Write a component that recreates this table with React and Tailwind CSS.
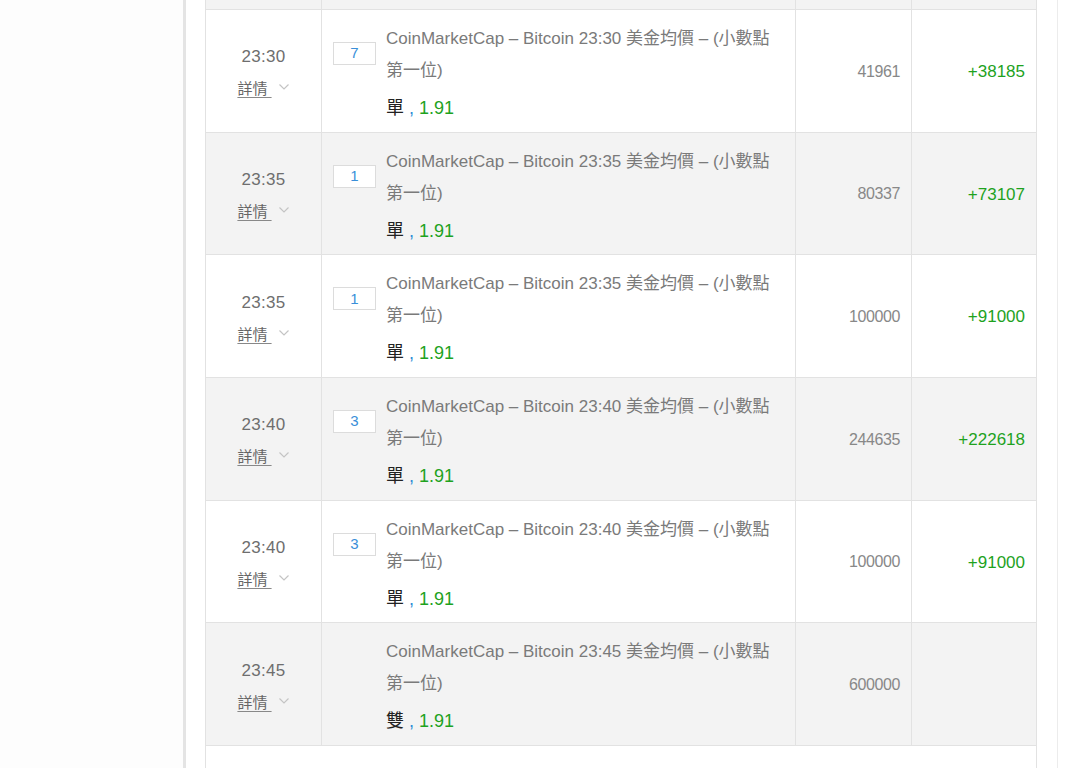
import React from "react";

const rows = [
  { time: "23:30", box: "7", pick: "單", amount: "41961", win: "+38185", gray: false },
  { time: "23:35", box: "1", pick: "單", amount: "80337", win: "+73107", gray: true },
  { time: "23:35", box: "1", pick: "單", amount: "100000", win: "+91000", gray: false },
  { time: "23:40", box: "3", pick: "單", amount: "244635", win: "+222618", gray: true },
  { time: "23:40", box: "3", pick: "單", amount: "100000", win: "+91000", gray: false },
  { time: "23:45", box: null, pick: "雙", amount: "600000", win: "", gray: true },
];

const font = { fontFamily: '"Liberation Sans", "Noto Sans CJK TC", sans-serif' };

function Chevron() {
  return (
    <svg width="12" height="8" viewBox="0 0 12 8" className="ml-[6px] -mt-[4px]">
      <path d="M1.5 1.5 L6 6 L10.5 1.5" fill="none" stroke="#c4c4c4" strokeWidth="1.2" />
    </svg>
  );
}

function Row({ r }) {
  return (
    <div
      className={`grid grid-cols-[116px_474px_116px_125px] h-[122.67px] border-b border-[#e2e2e2] ${
        r.gray ? "bg-[#f3f3f3]" : "bg-white"
      }`}
    >
      <div className="border-r border-[#e2e2e2] flex flex-col items-center justify-center pt-[5px]">
        <div className="text-[17px] leading-[32px] text-[#6e6e6e] tracking-[0.3px]">{r.time}</div>
        <div className="flex items-center leading-[32px]">
          <span className="text-[15px] text-[#666] underline underline-offset-[3px] decoration-[#888]">
            詳情&nbsp;
          </span>
          <Chevron />
        </div>
      </div>
      <div className="border-r border-[#e2e2e2] flex pt-[13px]">
        <div className="w-[43px] ml-[11px] mr-[10px] shrink-0 mt-[19px]">
          {r.box && (
            <div className="h-[23px] border border-[#dcdcdc] bg-white flex items-center justify-center text-[15px] text-[#3a8fd9]">
              {r.box}
            </div>
          )}
        </div>
        <div className="flex flex-col">
          <div className="text-[17px] leading-[32px] text-[#7a7a7a] w-[400px]">
            CoinMarketCap – Bitcoin {r.time} 美金均價 – (小數點
            <br />
            第一位)
          </div>
          <div className="mt-[4px] leading-[34px] text-[18px]">
            <span className="text-[#222]">{r.pick}</span>
            <span className="text-[#2b8bd6]"> , </span>
            <span className="text-[#1ea21e]">1.91</span>
          </div>
        </div>
      </div>
      <div className="border-r border-[#e2e2e2] flex items-center justify-end pr-[11px] pt-[2px] text-[16px] tracking-[-0.4px] text-[#888]">
        {r.amount}
      </div>
      <div className="border-r border-[#e2e2e2] flex items-center justify-end pr-[11px] pt-[2px] text-[17px] text-[#1ea21e]">
        {r.win}
      </div>
    </div>
  );
}

export default function App() {
  return (
    <div className="w-[1080px] h-[768px] overflow-hidden bg-white flex" style={font}>
      <div className="w-[183px] shrink-0 bg-[#fdfdfd]" />
      <div className="w-[875px] shrink-0 border-l-[3px] border-r border-l-[#e4e4e4] border-r-[#ececec] pl-[19px] bg-white">
        <div className="w-[832px] border-l border-[#e2e2e2]">
          <div className="grid grid-cols-[116px_474px_116px_125px] h-[10px] border-b border-[#e2e2e2] bg-[#f3f3f3]">
            <div className="border-r border-[#e2e2e2]" />
            <div className="border-r border-[#e2e2e2]" />
            <div className="border-r border-[#e2e2e2]" />
            <div className="border-r border-[#e2e2e2]" />
          </div>
          {rows.map((r, i) => (
            <Row key={i} r={r} />
          ))}
          <div className="h-[40px] border-r border-[#e2e2e2] bg-white" />
        </div>
      </div>
      <div className="flex-1 bg-white" />
    </div>
  );
}
